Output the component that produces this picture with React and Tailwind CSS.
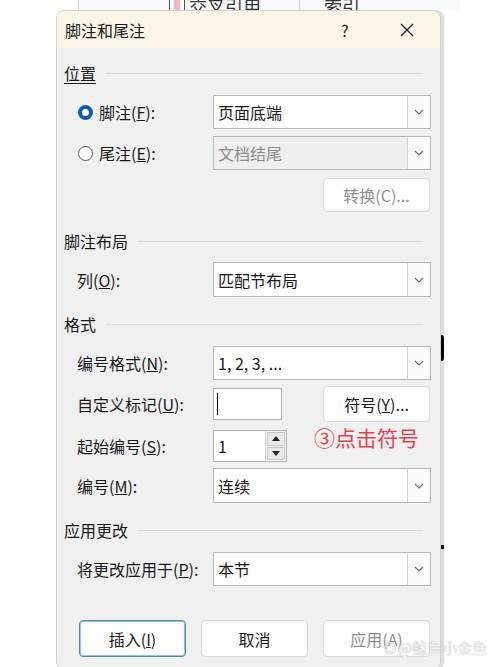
import React from "react";

const font = { fontFamily: '"Noto Sans CJK SC", "Noto Sans", sans-serif' };

function Chevron() {
  return (
    <svg viewBox="0 0 10 6" className="h-[6px] w-[10px]" fill="none" aria-hidden="true">
      <path d="M1 1l4 4 4-4" stroke="#6b6b6b" strokeWidth="1.1" />
    </svg>
  );
}

function Select({ value, disabled }) {
  return (
    <div
      className={`flex h-full w-[218px] border border-[#b9b9b9] ${disabled ? "bg-[#efefef]" : "bg-white"}`}
    >
      <div className={`flex flex-1 items-center pl-[4px] text-[16px] ${disabled ? "text-[#8c8c8c]" : "text-[#1a1a1a]"}`}>
        {value}
      </div>
      <div className="flex w-[23px] items-center justify-center border-l border-[#d4d4d4] bg-[#fbfbfb]">
        <Chevron />
      </div>
    </div>
  );
}

function Heading({ children, className }) {
  return (
    <div className={`flex items-center gap-[10px] pr-[8px] ${className}`}>
      <span className="text-[16px] leading-[22px] text-[#1a1a1a]">{children}</span>
      <div className="flex-1 border-t border-[#dcdcdc]" />
    </div>
  );
}

function Row({ label, children, className }) {
  return (
    <div className={`flex items-center ${className}`}>
      <div className="w-[149px] pl-[13px] text-[16px] text-[#1a1a1a]">{label}</div>
      <div className="flex h-full flex-1 items-center">{children}</div>
    </div>
  );
}

function Btn({ children, disabled, focus, className }) {
  return (
    <div
      className={`flex h-full w-[107px] items-center justify-center rounded-[4px] border bg-[#fdfdfd] text-[16px] ${
        focus ? "border-[#4d8aa6] shadow-[inset_0_0_0_1px_#9cc3d4]" : "border-[#dadada]"
      } ${disabled ? "text-[#8f8f8f]" : "text-[#1a1a1a]"} ${className}`}
    >
      {children}
    </div>
  );
}

export default function App() {
  return (
    <div className="relative h-[667px] w-[500px] overflow-hidden bg-white" style={font}>
      {/* ribbon remains above the dialog */}
      <div className="flex h-[10px] overflow-hidden">
        <div className="w-[79px] border-r border-[#d0d0d0]" />
        <div className="flex w-[221px] items-end gap-[4px] border-r border-[#d6d6d6] bg-[#f9f9f9] pl-[90px]">
          <span className="-mb-[3px] h-[14px] w-[16px] border border-[#555] bg-white">
            <span className="ml-[4px] block h-full w-[6px] bg-[#f4b6bd]" />
          </span>
          <span className="-mb-[6px] text-[18px] leading-[20px] text-[#333]">交叉引用</span>
        </div>
        <div className="flex items-end bg-[#f9f9f9] pl-[24px] pr-[100px]">
          <span className="-mb-[6px] text-[18px] leading-[20px] text-[#333]">索引</span>
        </div>
      </div>

      <div className="ml-[56px] flex h-[660px] w-[385px] flex-col rounded-[8px] border border-[#d2d2d2] bg-[#f0f0f0] pl-[7px] pr-[9px] shadow-[3px_0_0_#dedede]">
        {/* title bar */}
        <div className="-ml-[7px] -mr-[9px] flex h-[37px] items-center rounded-t-[8px] bg-[#fbf5e8] pl-[8px] text-[16px] text-[#1a1a1a]">
          <span className="flex-1">脚注和尾注</span>
          <span className="w-[59px] text-[16px]">?</span>
          <svg viewBox="0 0 14 14" className="mr-[26px] h-[14px] w-[14px]" aria-hidden="true">
            <path d="M1 1l12 12M13 1L1 13" stroke="#222" strokeWidth="1.3" />
          </svg>
        </div>

        <Heading className="mt-[14px] h-[22px]">
          <span className="underline underline-offset-[3px]">位置</span>
        </Heading>

        <div className="mt-[11px] flex h-[34px] items-center">
          <div className="flex w-[149px] items-center pl-[14px] text-[16px] text-[#1a1a1a]">
            <span className="h-[15px] w-[15px] rounded-full border-[4px] border-[#0f5ca8] bg-white" />
            <span className="ml-[6px]">
              脚注(<span className="underline">F</span>):
            </span>
          </div>
          <div className="h-full">
            <Select value="页面底端" />
          </div>
        </div>

        <div className="mt-[7px] flex h-[34px] items-center">
          <div className="flex w-[149px] items-center pl-[14px] text-[16px] text-[#1a1a1a]">
            <span className="h-[15px] w-[15px] rounded-full border border-[#555] bg-white" />
            <span className="ml-[6px]">
              尾注(<span className="underline">E</span>):
            </span>
          </div>
          <div className="h-full">
            <Select value="文档结尾" disabled />
          </div>
        </div>

        <div className="mt-[8px] flex h-[34px] justify-end pr-[1px]">
          <Btn disabled>转换(C)...</Btn>
        </div>

        <Heading className="mt-[18px] h-[22px]">脚注布局</Heading>

        <Row className="mt-[10px] h-[35px]" label={<>列(<span className="underline">O</span>):</>}>
          <Select value="匹配节布局" />
        </Row>

        <Heading className="mt-[16px] h-[22px]">格式</Heading>

        <Row className="mt-[11px] h-[34px]" label={<>编号格式(<span className="underline">N</span>):</>}>
          <Select value="1, 2, 3, ..." />
        </Row>

        <Row className="mt-[6px] h-[36px]" label={<>自定义标记(<span className="underline">U</span>):</>}>
          <div className="flex h-[32px] w-[69px] items-center border border-[#b5b5b5] bg-white pl-[3px]">
            <div className="h-[22px] w-[1px] bg-black" />
          </div>
          <div className="flex-1" />
          <Btn className="mr-[1px]">
            符号(<span className="underline">Y</span>)...
          </Btn>
        </Row>

        <Row className="mt-[8px] h-[32px]" label={<>起始编号(<span className="underline">S</span>):</>}>
          <div className="flex h-[32px] w-[74px] border border-[#b5b5b5] bg-white">
            <div className="flex flex-1 items-center pl-[4px] text-[16px] text-[#1a1a1a]">1</div>
            <div className="flex w-[21px] flex-col gap-[1px] border-l border-[#cfcfcf] bg-[#f4f4f4] p-[1px]">
              <div className="flex flex-1 items-center justify-center border border-[#c8c8c8] bg-[#e8e8e8]">
                <span className="h-0 w-0 border-x-[4px] border-b-[5px] border-x-transparent border-b-[#222]" />
              </div>
              <div className="flex flex-1 items-center justify-center border border-[#c8c8c8] bg-[#e8e8e8]">
                <span className="h-0 w-0 border-x-[4px] border-t-[5px] border-x-transparent border-t-[#222]" />
              </div>
            </div>
          </div>
        </Row>

        <Row className="mt-[6px] h-[35px]" label={<>编号(<span className="underline">M</span>):</>}>
          <Select value="连续" />
        </Row>

        <Heading className="mt-[16px] h-[22px]">应用更改</Heading>

        <Row className="mt-[11px] h-[34px]" label={<>将更改应用于(<span className="underline">P</span>):</>}>
          <Select value="本节" />
        </Row>

        <div className="mt-[34px] flex h-[37px] gap-[15px] pl-[15px]">
          <Btn focus>
            插入(<span className="underline">I</span>)
          </Btn>
          <Btn>取消</Btn>
          <Btn disabled>应用(A)</Btn>
        </div>
      </div>

      {/* page edge marks to the right of the dialog */}
      <div className="absolute left-[441px] top-[335px] h-[26px] w-[3px] rounded-r-full bg-black" />
      <div className="absolute left-[441px] top-[545px] h-[4px] w-[3px] bg-black" />

      {/* red annotation */}
      <div className="absolute left-[314px] top-[423px] text-[21px] leading-[28px] text-[#e5414e]">③点击符号</div>

      {/* watermark */}
      <div className="absolute left-[384px] top-[638px] flex items-center gap-[2px] text-[15px] leading-[20px] text-[#f2f2f2] [text-shadow:0_0_1px_#9a9a9a]">
        <span className="text-[12px]">◎</span>
        <span>@鲸鱼小金鱼</span>
      </div>
    </div>
  );
}
